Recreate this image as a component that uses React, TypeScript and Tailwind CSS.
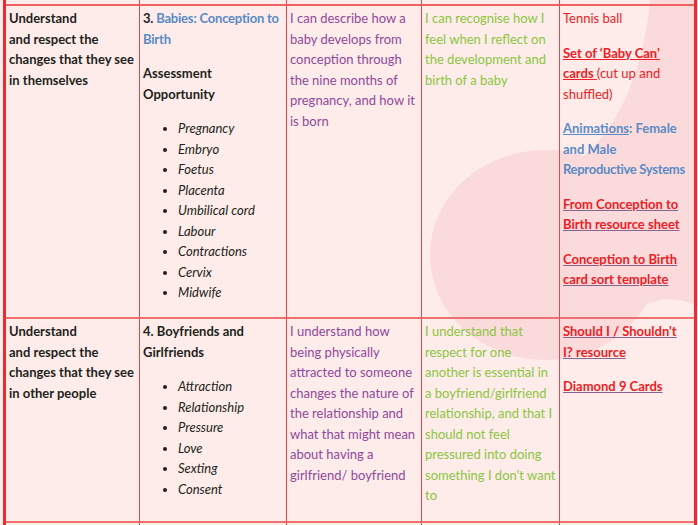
import React from "react";

const cell =
  "border-r border-r-[#e4474c] border-b-2 border-b-[#ef7070] px-[3px] pt-[2px]";
const lastCell = "border-b-2 border-b-[#ef7070] px-[3px] pt-[2px]";

const dark = "text-[#231f20]";
const blue = "text-[#5a8bc7]";
const purple = "text-[#91489c]";
const green = "text-[#8cc641]";
const red = "text-[#ee1c25]";

function Bullets({ items }: { items: string[] }) {
  return (
    <ul className={`list-disc pl-[35px] italic ${dark}`}>
      {items.map((t) => (
        <li key={t}>{t}</li>
      ))}
    </ul>
  );
}

export default function App() {
  return (
    <div
      className="relative w-[698px] h-[525px] overflow-hidden bg-[#fdece9] text-[13px] leading-[20.5px]"
      style={{ fontFamily: "Lato, 'Open Sans', sans-serif" }}
    >
      <svg
        className="absolute inset-0"
        width="698"
        height="525"
        viewBox="0 0 698 525"
      >
        <ellipse cx="545" cy="255" rx="115" ry="105" fill="#fbdadb" />
        <path
          d="M650 0 L698 0 L698 306 C668 292 642 300 622 325 C606 345 590 356 560 359 L545 258 L560 172 C605 150 642 90 650 0 Z"
          fill="#fbdadb"
        />
      </svg>

      <div className="relative ml-[3px] w-[694px] border-l-[3px] border-r-[3px] border-l-[#ee2a30] border-r-[#ee2a30] grid grid-cols-[134px_147px_135px_138px_134px] grid-rows-[6px_313px_204px_20px]">
        {/* partial row above */}
        <div className="border-r border-r-[#e4474c] border-b-2 border-b-[#ef6060]" />
        <div className="border-r border-r-[#e4474c] border-b-2 border-b-[#ef6060]" />
        <div className="border-r border-r-[#e4474c] border-b-2 border-b-[#ef6060]" />
        <div className="border-r border-r-[#e4474c] border-b-2 border-b-[#ef6060]" />
        <div className="border-b-2 border-b-[#ef6060]" />

        {/* Row 1 */}
        <div className={`${cell} font-bold ${dark}`}>
          Understand
          <br />
          and respect the changes that they see in themselves
        </div>
        <div className={`${cell} flex flex-col gap-[14px]`}>
          <p className="font-bold tracking-[-0.2px]">
            <span className="whitespace-nowrap">
              <span className={dark}>3. </span>
              <span className={blue}>Babies: Conception to</span>
            </span>
            <br />
            <span className={blue}>Birth</span>
          </p>
          <p className={`font-bold ${dark}`}>Assessment Opportunity</p>
          <Bullets
            items={[
              "Pregnancy",
              "Embryo",
              "Foetus",
              "Placenta",
              "Umbilical cord",
              "Labour",
              "Contractions",
              "Cervix",
              "Midwife",
            ]}
          />
        </div>
        <div className={`${cell} ${purple}`}>
          I can describe how a baby develops from conception through the nine
          months of pregnancy, and how it is born
        </div>
        <div className={`${cell} ${green}`}>
          I can recognise how I feel when I reflect on the development and
          birth of a baby
        </div>
        <div className={`${lastCell} flex flex-col gap-[14px] ${red}`}>
          <p>Tennis ball</p>
          <div>
            <p>
              <a className="font-bold underline decoration-[#ee1c25]">
                Set of ‘Baby Can’
              </a>
            </p>
            <p>
              <a className="font-bold underline decoration-[#ee1c25]">
                cards{" "}
              </a>
              (cut up and
            </p>
            <p>shuffled)</p>
          </div>
          <p className={`font-bold ${blue}`}>
            <a className="underline decoration-[#5a8bc7]">Animations</a>: Female
            <br />
            and Male
            <br />
            <span className="whitespace-nowrap tracking-[-0.3px]">
              Reproductive Systems
            </span>
          </p>
          <p>
            <a className="font-bold underline decoration-[#8a6390]">
              From Conception to
              <br />
              Birth resource sheet
            </a>
          </p>
          <p>
            <a className="font-bold underline decoration-[#8a6390]">
              Conception to Birth
              <br />
              card sort template
            </a>
          </p>
        </div>

        {/* Row 2 */}
        <div className={`${cell} font-bold ${dark}`}>
          Understand
          <br />
          and respect the changes that they see in other people
        </div>
        <div className={`${cell} flex flex-col gap-[14px]`}>
          <p className={`font-bold ${dark}`}>4. Boyfriends and Girlfriends</p>
          <Bullets
            items={[
              "Attraction",
              "Relationship",
              "Pressure",
              "Love",
              "Sexting",
              "Consent",
            ]}
          />
        </div>
        <div className={`${cell} ${purple}`}>
          I understand how being physically attracted to someone changes the
          nature of the relationship and what that might mean about having a
          girlfriend/ boyfriend
        </div>
        <div className={`${cell} ${green}`}>
          I understand that respect for one another is essential in a
          boyfriend/girlfriend relationship, and that I should not feel
          pressured into doing something I don’t want to
        </div>
        <div className={`${lastCell} flex flex-col gap-[14px] ${red}`}>
          <p>
            <a className="font-bold underline decoration-[#8a6390]">
              Should I / Shouldn't
              <br />
              I? resource
            </a>
          </p>
          <p>
            <a className="font-bold underline decoration-[#8a6390]">
              Diamond 9 Cards
            </a>
          </p>
        </div>

        {/* partial row below */}
        <div className="border-r border-r-[#e4474c]" />
        <div className="border-r border-r-[#e4474c]" />
        <div className="border-r border-r-[#e4474c]" />
        <div className="border-r border-r-[#e4474c]" />
        <div />
      </div>
    </div>
  );
}
